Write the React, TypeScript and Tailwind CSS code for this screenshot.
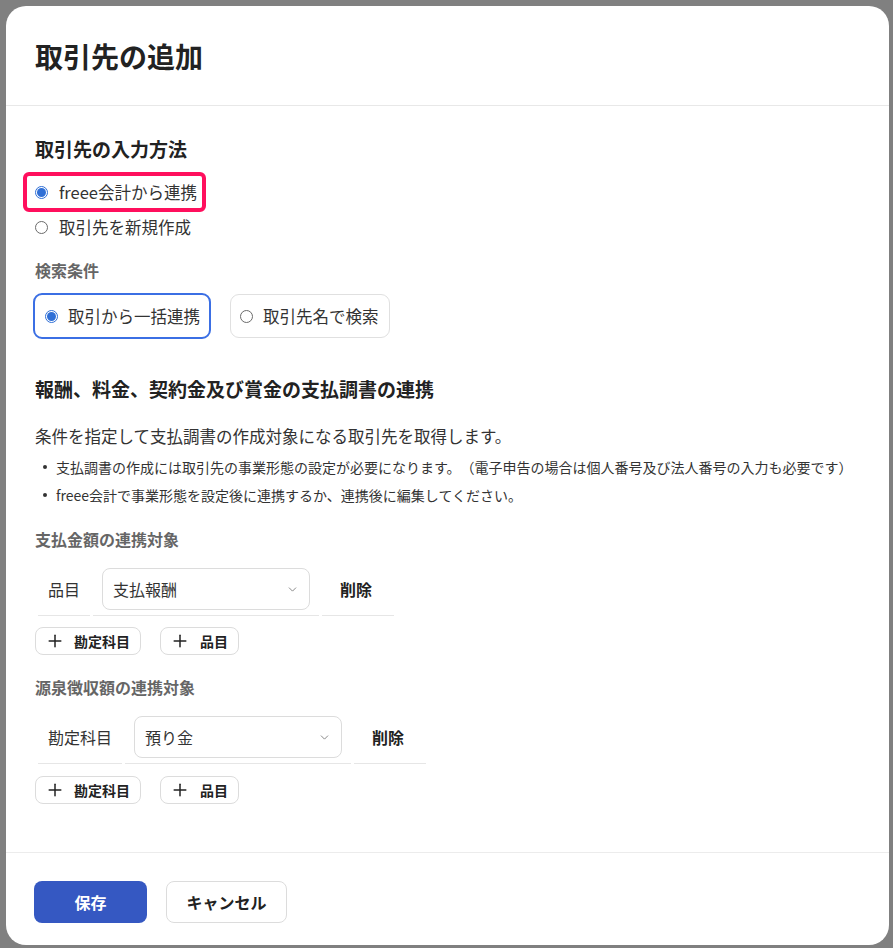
import { Plus, ChevronDown } from 'lucide-react';

const font = { fontFamily: '"Noto Sans CJK JP", "Noto Sans", sans-serif' };

function Radio({ checked }: { checked?: boolean }) {
  return checked ? (
    <span className="w-[13px] h-[13px] rounded-full border border-[#2f6fd6] flex items-center justify-center flex-shrink-0">
      <span className="w-[9px] h-[9px] rounded-full bg-[#2f6fd6]" />
    </span>
  ) : (
    <span className="w-[13px] h-[13px] rounded-full border border-[#6b6b6b] bg-white flex-shrink-0" />
  );
}

function AddButtons() {
  return (
    <div className="flex gap-[19px]">
      <button className="h-[28px] pl-[9px] pr-[10px] flex items-center gap-[9px] border border-[#dcdcdc] rounded-lg bg-white text-[14px] font-bold text-[#222]">
        <Plus className="w-5 h-5" strokeWidth={1.8} />
        勘定科目
      </button>
      <button className="h-[28px] pl-[9px] pr-[10px] flex items-center gap-[10px] border border-[#dcdcdc] rounded-lg bg-white text-[14px] font-bold text-[#222]">
        <Plus className="w-5 h-5" strokeWidth={1.8} />
        品目
      </button>
    </div>
  );
}

function TargetRow({ label, value }: { label: string; value: string }) {
  return (
    <div className="flex gap-[3px] pl-[3px]">
      <div className="px-[10px] pt-[8px] pb-[5px] border-b border-[#e6e6e6] flex items-center">
        <span className="h-[42px] flex items-center text-[16px] text-[#333]">{label}</span>
      </div>
      <div className="w-[226px] px-[9px] pt-[8px] pb-[5px] border-b border-[#e6e6e6]">
        <div className="h-[42px] border border-[#dcdcdc] rounded-lg flex items-center justify-between pl-[10px] pr-[10px] text-[16px] text-[#333]">
          <span>{value}</span>
          <ChevronDown className="w-[13px] h-[13px] text-[#777]" strokeWidth={1.6} />
        </div>
      </div>
      <div className="w-[72px] pl-[18px] pt-[8px] pb-[5px] border-b border-[#e6e6e6]">
        <span className="h-[42px] flex items-center text-[16px] font-bold text-[#222]">削除</span>
      </div>
    </div>
  );
}

export default function App() {
  return (
    <div className="w-[893px] h-[948px] bg-[#808080] pl-[6px] pr-[4px] pt-[6px] pb-[3px] [text-spacing-trim:space-all]" style={font}>
      <div className="h-full bg-white rounded-[20px] flex flex-col overflow-hidden">
        <div className="h-[100px] px-[29px] flex items-center border-b border-[#e8e8e8]">
          <h1 className="text-[28px] font-bold text-[#222] leading-none">取引先の追加</h1>
        </div>

        <div className="flex-1 px-[29px] pt-[30px] text-[#333]">
          <h2 className="text-[19px] leading-[26px] font-bold text-[#222]">取引先の入力方法</h2>

          <div className="relative h-[34px] mt-[13px] flex items-center gap-[11px]">
            <div className="absolute -left-[12px] -top-[3px] w-[183px] h-[40px] border-4 border-[#ff0f5d] rounded-[6px]" />
            <Radio checked />
            <span className="text-[16.5px]">freee会計から連携</span>
          </div>
          <div className="h-[36px] flex items-center gap-[11px]">
            <Radio />
            <span className="text-[16.5px]">取引先を新規作成</span>
          </div>

          <h3 className="mt-[13px] text-[16px] leading-[24px] font-bold text-[#666]">検索条件</h3>

          <div className="mt-[11px] flex items-center gap-[19px] -ml-[2px]">
            <div className="w-[178px] h-[46px] border-2 border-[#3b6fe4] rounded-[9px] pl-[10px] flex items-center gap-[10px]">
              <Radio checked />
              <span className="text-[16.5px]">取引から一括連携</span>
            </div>
            <div className="w-[160px] h-[44px] border border-[#e0e0e0] rounded-[9px] pl-[9px] flex items-center gap-[10px]">
              <Radio />
              <span className="text-[16.5px]">取引先名で検索</span>
            </div>
          </div>

          <h2 className="mt-[37px] text-[19px] leading-[26px] font-bold text-[#222]">報酬、料金、契約金及び賞金の支払調書の連携</h2>
          <p className="mt-[21px] text-[16.5px] leading-[26px]">条件を指定して支払調書の作成対象になる取引先を取得します。</p>
          <ul className="mt-[4px] text-[14px] leading-[28px] whitespace-nowrap">
            <li className="flex items-center gap-[9px]">
              <span className="ml-[8px] w-[4px] h-[4px] rounded-full bg-[#333] flex-shrink-0" />
              支払調書の作成には取引先の事業形態の設定が必要になります。（電子申告の場合は個人番号及び法人番号の入力も必要です）
            </li>
            <li className="flex items-center gap-[9px]">
              <span className="ml-[8px] w-[4px] h-[4px] rounded-full bg-[#333] flex-shrink-0" />
              freee会計で事業形態を設定後に連携するか、連携後に編集してください。
            </li>
          </ul>

          <h3 className="mt-[18px] text-[16px] leading-[24px] font-bold text-[#666]">支払金額の連携対象</h3>
          <div className="mt-[9px]">
            <TargetRow label="品目" value="支払報酬" />
          </div>
          <div className="mt-[11px]">
            <AddButtons />
          </div>

          <h3 className="mt-[20px] text-[16px] leading-[24px] font-bold text-[#666]">源泉徴収額の連携対象</h3>
          <div className="mt-[9px]">
            <TargetRow label="勘定科目" value="預り金" />
          </div>
          <div className="mt-[12px]">
            <AddButtons />
          </div>
        </div>

        <div className="border-t border-[#ececec] px-[28px] pt-[28px] pb-[22px] flex gap-[19px]">
          <button className="w-[113px] h-[42px] rounded-lg bg-[#3558c2] text-white text-[16px] font-bold">保存</button>
          <button className="w-[121px] h-[42px] rounded-lg border border-[#dcdcdc] bg-white text-[#222] text-[16px] font-bold">キャンセル</button>
        </div>
      </div>
    </div>
  );
}
